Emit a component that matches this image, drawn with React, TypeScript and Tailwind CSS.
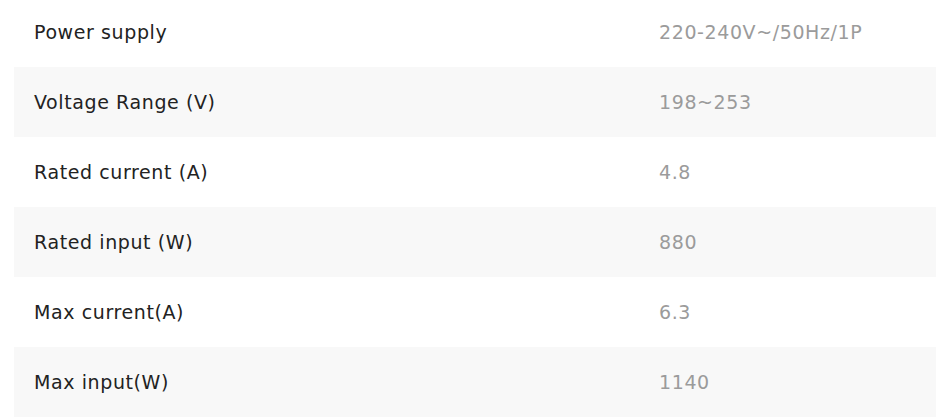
import React from 'react';

const specs = [
  { label: 'Power supply', value: '220-240V~/50Hz/1P' },
  { label: 'Voltage Range (V)', value: '198~253' },
  { label: 'Rated current (A)', value: '4.8' },
  { label: 'Rated input (W)', value: '880' },
  { label: 'Max current(A)', value: '6.3' },
  { label: 'Max input(W)', value: '1140' },
];

export default function App() {
  return (
    <div className="w-[936px] h-[417px] overflow-hidden bg-white" style={{ fontFamily: '"DejaVu Sans", sans-serif' }}>
      <div className="-mt-[3px] pl-[14px]">
        {specs.map((row, i) => (
          <div
            key={row.label}
            className={`flex items-center h-[70px] pl-5 ${i % 2 === 1 ? 'bg-[#f8f8f8]' : 'bg-white'}`}
          >
            <div className="w-[625px] text-[19px] tracking-[0.6px] text-[#222]">{row.label}</div>
            <div className="text-[19px] tracking-[0.6px] text-[#9b9b9b]">{row.value}</div>
          </div>
        ))}
      </div>
    </div>
  );
}
